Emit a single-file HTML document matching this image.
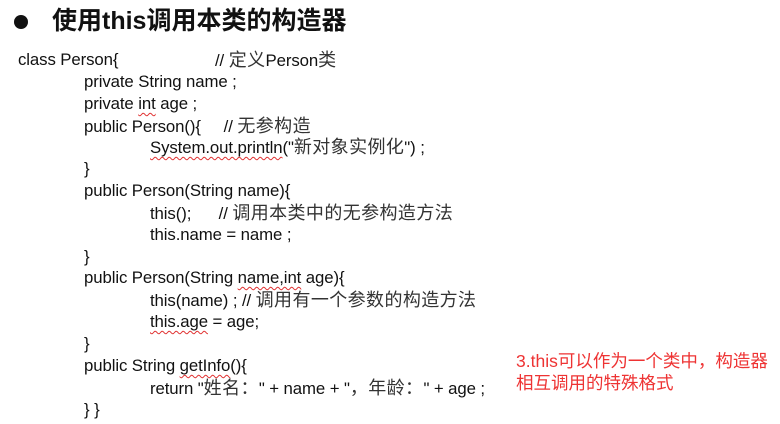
<!DOCTYPE html>
<html><head><meta charset="utf-8"><style>
html,body{margin:0;padding:0;background:#fff;}
body{width:780px;height:424px;position:relative;overflow:hidden;font-family:"Liberation Sans","Noto Sans CJK SC",sans-serif;color:#111;}
.l{position:absolute;font-size:16.8px;line-height:20px;white-space:pre;letter-spacing:-0.1px;}
.l b{font-weight:normal;font-size:18px;color:#333;letter-spacing:0.4px;}
.sq{text-decoration:underline wavy #e03030;text-decoration-thickness:1px;text-underline-offset:3px;}
.t{position:absolute;left:52px;top:5px;font-size:25px;font-weight:bold;line-height:32px;white-space:pre;}
.b{position:absolute;left:14px;top:15px;width:14px;height:14px;border-radius:50%;background:#111;}
.r{position:absolute;left:516px;font-size:17.5px;line-height:21px;color:#e33;white-space:pre;}
</style></head><body>
<div class="b"></div>
<div class="t">使用this调用本类的构造器</div>
<div class="l" style="left:18px;top:50px">class Person{</div>
<div class="l" style="left:215px;top:50px">// <b>定义</b>Person<b>类</b></div>
<div class="l" style="left:84px;top:72px">private String name ;</div>
<div class="l" style="left:84px;top:94px">private <span class="sq">int</span> age ;</div>
<div class="l" style="left:84px;top:116px">public Person(){     // <b>无参构造</b></div>
<div class="l" style="left:150px;top:137px"><span class="sq">System.out.println</span>("<b>新对象实例化</b>") ;</div>
<div class="l" style="left:84px;top:159px">}</div>
<div class="l" style="left:84px;top:181px">public Person(String name){</div>
<div class="l" style="left:150px;top:203px">this();      // <b>调用本类中的无参构造方法</b></div>
<div class="l" style="left:150px;top:225px">this.name = name ;</div>
<div class="l" style="left:84px;top:247px">}</div>
<div class="l" style="left:84px;top:268px">public Person(String <span class="sq">name,int</span> age){</div>
<div class="l" style="left:150px;top:290px">this(name) ; // <b>调用有一个参数的构造方法</b></div>
<div class="l" style="left:150px;top:312px"><span class="sq">this.age</span> = age;</div>
<div class="l" style="left:84px;top:334px">}</div>
<div class="l" style="left:84px;top:356px">public String <span class="sq">getInfo</span>(){</div>
<div class="l" style="left:150px;top:378px">return "<b>姓名：</b>" + name + "<b>，年龄：</b>" + age ;</div>
<div class="l" style="left:84px;top:400px">} }</div>
<div class="r" style="top:351px">3.this可以作为一个类中，构造器</div>
<div class="r" style="top:373px">相互调用的特殊格式</div>
</body></html>
